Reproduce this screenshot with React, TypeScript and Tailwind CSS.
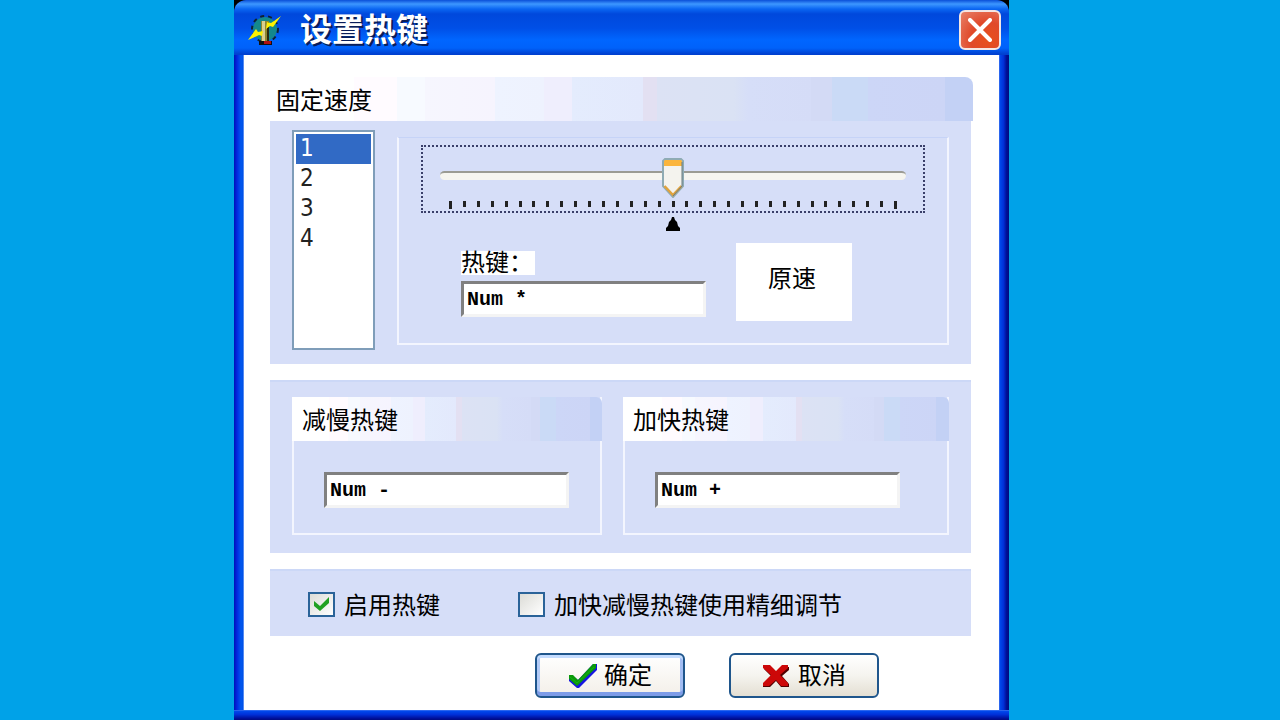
import { useState, type ReactNode } from "react"

const speeds = ["1", "2", "3", "4"]
const ticks = Array.from({ length: 33 }, (_, i) => i)

const headerGradient =
    "bg-[linear-gradient(to_right,#ffffff_12%,#fffbff_12%,#fffbff_18%,#f7faff_18%,#f7faff_22%,#f6f6fe_22%,#f6f4fe_32%,#eef3ff_32%,#eef2fe_39%,#efeefd_39%,#efeefd_43%,#e4ecfd_43%,#e3e9fc_53%,#e3e0f2_53%,#e3e0f2_55%,#dce2f4_55%,#dae2f4_66%,#d6def8_68%,#d5dcf7_77%,#d3daf5_77%,#d3daf5_80%,#cadaf6_80%,#cadaf6_85%,#ccd6f7_85%,#ccd5f6_96%,#c3d1f5_96%,#c3d1f5_100%)]"

function AppIcon() {
    return (
        <svg viewBox="0 0 34 32" className="h-8 w-[34px]" aria-hidden="true">
            <circle cx="17" cy="15" r="12" fill="#14888c" />
            <circle cx="17" cy="15" r="13" fill="none" stroke="#10222e" strokeWidth="2" strokeDasharray="4 4" />
            <path d="M13 7h8v21h-8z" fill="#8f8730" />
            <path d="M14 7h3v21h-3z" fill="#d9cf90" />
            <path d="M20 8v20" stroke="#2a2a10" strokeWidth="2" />
            <path d="M0 26 8 15l2 3 5-1-1 5-3-1-4 2z" fill="#fff200" />
            <path d="M33 2 25 13l-3-1-4 3 1-7 4 1 3-2z" fill="#fff200" />
            <path d="M11 27h13v4H11z" fill="#101010" />
            <path d="M16 27h7v3h-7z" fill="#b01010" />
        </svg>
    )
}

function HotkeyInput({ id, label, value }: { id: string; label?: string; value: string }) {
    return (
        <input
            id={id}
            type="text"
            aria-label={label}
            defaultValue={value}
            className="block h-9 w-[245px] border-[3px] border-t-[#808080] border-l-[#808080] border-r-[#f4f4f4] border-b-[#f4f4f4] bg-white px-[3px] font-['Liberation_Mono','Noto_Sans_CJK_SC',monospace] text-xl leading-7 font-bold text-black outline-none"
        />
    )
}

function HotkeyGroup({ title, className, children }: { title: string; className: string; children: ReactNode }) {
    return (
        <section className={`h-[138px] border-2 border-t-0 border-[#f3f5fe] ${className}`}>
            <h2
                className={`-mx-0.5 flex h-11 items-center rounded-tr-md pt-1 pl-2.5 text-2xl leading-8 ${headerGradient}`}
            >
                {title}
            </h2>
            <div className="mt-[31px] ml-[30px]">{children}</div>
        </section>
    )
}

function CheckOption({ id, label, checked }: { id: string; label: string; checked?: boolean }) {
    return (
        <div className="flex items-center gap-[9px]">
            <span className="grid">
                <input
                    id={id}
                    type="checkbox"
                    defaultChecked={checked}
                    className="peer col-start-1 row-start-1 h-[25px] w-[27px] appearance-none border-2 border-[#2a6399] bg-linear-to-br from-[#dcdcd7] to-white"
                />
                <svg
                    viewBox="0 0 27 25"
                    className="pointer-events-none invisible col-start-1 row-start-1 h-[25px] w-[27px] peer-checked:visible"
                    aria-hidden="true"
                >
                    <path d="M6 9v5l6 5 9-8V5l-9 9z" fill="#21a121" />
                </svg>
            </span>
            <label htmlFor={id} className="pt-0.5 text-2xl leading-8">
                {label}
            </label>
        </div>
    )
}

function SpeedSlider() {
    const [value, setValue] = useState(16)

    return (
        <div className="relative h-[68px] border-2 border-dotted border-[#3a3f6a]">
            <div className="mx-[17px] mt-6 h-[9px] rounded-full border-t-2 border-[#9b9b94] bg-[#f6f5f0]" />
            <div className="mx-[26px] mt-[21px] flex h-2 justify-between">
                {ticks.map((tick) => (
                    <span
                        key={tick}
                        className={tick === 0 || tick === 32 ? "h-2 w-[3px] bg-[#222]" : "h-1.5 w-[3px] bg-[#222]"}
                    />
                ))}
            </div>
            <div className="pointer-events-none absolute inset-x-[27px] top-[11px]">
                <svg
                    viewBox="0 0 22 40"
                    className="absolute h-10 w-[22px] -translate-x-1/2"
                    style={{ left: `${(value / 32) * 100}%` }}
                    aria-hidden="true"
                >
                    <path d="M3 1h16l2 2v25L11 39 1 28V3z" fill="#f4f3ee" stroke="#8fabb4" strokeWidth="2" />
                    <path d="M3 2h16l1 1v5H2V3z" fill="#fbb53c" />
                    <path d="M2.500 28 11 37l8.500-9" fill="none" stroke="#e0a23c" strokeWidth="2.500" />
                    <path d="M20 4v24l-9 10" fill="none" stroke="#6c7c80" />
                </svg>
            </div>
            <input
                type="range"
                aria-label="固定速度"
                min={0}
                max={32}
                value={value}
                onChange={(e) => setValue(Number(e.target.value))}
                className="absolute inset-x-4 top-3 h-10 opacity-0"
            />
        </div>
    )
}

export default function App() {
    return (
        <div className="flex min-h-screen flex-col bg-[#00a2e8] pr-[271px] pl-[234px] font-['Liberation_Sans','Noto_Sans_CJK_SC',sans-serif] text-black">
            <main className="flex grow flex-col bg-black">
                <header className="flex h-[55px] shrink-0 items-center rounded-t-xl bg-[linear-gradient(to_bottom,#0a4fd8_0px,#3d97ff_4px,#0a66f2_9px,#0048dc_14px,#004fe6_28px,#0066ff_40px,#0062fa_48px,#0040d0_54px)] pt-1 pr-2 pl-3.5">
                    <AppIcon />
                    <h1 className="ml-[18px] grow text-[32px] leading-10 font-bold text-white [text-shadow:2px_2px_0_#0a1e5a]">
                        设置热键
                    </h1>
                    <button
                        type="button"
                        aria-label="关闭"
                        className="grid h-10 w-[42px] place-items-center rounded-md border-2 border-[#f4e6e4] bg-[radial-gradient(circle_at_70%_75%,#e8501c_0%,#e0492a_45%,#e8836c_100%)]"
                    >
                        <svg viewBox="0 0 24 24" className="size-6" aria-hidden="true">
                            <path d="M2 2 22 22M22 2 2 22" stroke="#fff" strokeWidth="4" strokeLinecap="round" />
                        </svg>
                    </button>
                </header>

                <div className="flex grow">
                    <div className="w-2.5 shrink-0 bg-[linear-gradient(to_right,#0010b8,#0028e0_30%,#0058ee_70%,#0050e8_88%,#8fb4f8)]" />
                    <div className="flex grow flex-col bg-white pt-[22px] pr-7 pl-[26px]">
                        <section>
                            <h2
                                className={`-mr-0.5 flex h-11 items-center rounded-tr-lg pt-1 pl-1.5 text-2xl leading-8 ${headerGradient}`}
                            >
                                固定速度
                            </h2>
                            <div className="flex h-[243px] bg-[#d6def8] pr-[22px] pl-[22px]">
                                <select
                                    size={7}
                                    aria-label="固定速度"
                                    defaultValue="1"
                                    className="mt-[9px] h-[220px] w-[83px] shrink-0 appearance-none overflow-hidden border-2 border-[#7f9db9] bg-white p-0.5 font-['DejaVu_Sans_Condensed','DejaVu_Sans',sans-serif] text-2xl leading-7 outline-none"
                                >
                                    {speeds.map((speed) => (
                                        <option
                                            key={speed}
                                            value={speed}
                                            className="h-[30px] px-1 py-0 text-[#222] checked:bg-[linear-gradient(#316ac5,#316ac5)] checked:text-white"
                                        >
                                            {speed}
                                        </option>
                                    ))}
                                </select>

                                <div className="mt-4 ml-[22px] h-[208px] grow border-2 border-t border-[#f3f5fe] border-t-[#c6d3f7] px-[22px] pt-[7px]">
                                    <SpeedSlider />
                                    <svg viewBox="0 0 16 14" className="mx-auto mt-1 h-3.5 w-4" aria-hidden="true">
                                        <path d="M7 0h2l1 3 2 2 1 4 2 2v3H1v-3l2-2 1-4 2-2z" />
                                    </svg>
                                    <div className="mt-3 ml-10 flex gap-[30px]">
                                        <div>
                                            <label
                                                htmlFor="hotkey"
                                                className="mt-2 mb-1.5 block h-6 w-[74px] bg-white text-2xl leading-6 whitespace-nowrap"
                                            >
                                                热键：
                                            </label>
                                            <HotkeyInput id="hotkey" value="Num *" />
                                        </div>
                                        <button
                                            type="button"
                                            className="h-[78px] w-[116px] bg-white pr-1 pb-1.5 text-2xl leading-8"
                                        >
                                            原速
                                        </button>
                                    </div>
                                </div>
                            </div>
                        </section>

                        <div className="mt-4 flex h-[173px] gap-[21px] border-t-2 border-[#ccd8f7] bg-[#d6def8] px-[22px] pt-[15px]">
                            <HotkeyGroup title="减慢热键" className="w-[310px] shrink-0">
                                <HotkeyInput id="slower" label="减慢热键" value="Num -" />
                            </HotkeyGroup>
                            <HotkeyGroup title="加快热键" className="grow">
                                <HotkeyInput id="faster" label="加快热键" value="Num +" />
                            </HotkeyGroup>
                        </div>

                        <div className="mt-4 flex h-[67px] items-center gap-[78px] border-t-2 border-[#ccd8f7] bg-[#d6def8] pt-0.5 pl-[38px]">
                            <CheckOption id="enable" label="启用热键" checked />
                            <CheckOption id="fine" label="加快减慢热键使用精细调节" />
                        </div>

                        <div className="mt-[17px] flex justify-end gap-11 pr-[92px]">
                            <button
                                type="button"
                                className="flex h-[45px] w-[150px] items-center justify-center gap-1.5 rounded-md border-2 border-[#1f568c] bg-linear-to-b from-white to-[#f3efe8] text-2xl leading-8 shadow-[inset_0_3px_0_#c4dcff,inset_0_-4px_0_#7d9ce8,inset_3px_0_0_#b3cbf7,inset_-3px_0_0_#a3bdf3]"
                            >
                                <svg viewBox="0 0 30 26" className="h-[26px] w-[30px]" aria-hidden="true">
                                    <path d="M1 13v5l8 7h2L29 7V1h-4L10 17l-6-5z" fill="#1616e0" />
                                    <path d="M1 12h4l5 5L25 1h3v4L9 23l-8-7z" fill="#0a9a0a" />
                                    <path d="m2 14 7 6L26 4" fill="none" stroke="#14b414" strokeWidth="1" />
                                </svg>
                                确定
                            </button>
                            <button
                                type="button"
                                className="flex h-[45px] w-[150px] items-center justify-center gap-2 rounded-md border-2 border-[#1f568c] bg-linear-to-b from-white via-[#f5f4ef] to-[#e4dfd3] text-2xl leading-8"
                            >
                                <svg viewBox="0 0 28 24" className="h-6 w-7" aria-hidden="true">
                                    <path d="M2 3h7l5 5 6-5h7v3l-7 6 7 8v3h-8l-5-6-6 6H1v-3l8-8-7-7z" fill="#500000" />
                                    <path d="M1 1h7l6 6 6-6h6v3l-8 7 8 8v3h-7l-5-6-7 6H1v-3l8-8-8-7z" fill="#cc0808" />
                                </svg>
                                取消
                            </button>
                        </div>
                    </div>
                    <div className="w-2.5 shrink-0 bg-[linear-gradient(to_right,#3f74f0,#0046ea_15%,#0030d8_45%,#000f98_75%,#000a80)]" />
                </div>
                <div className="h-2.5 shrink-0 bg-[linear-gradient(to_bottom,#3f74f0,#0046ea_15%,#0030d8_45%,#000f98_85%,#000a80)]" />
            </main>
        </div>
    )
}
